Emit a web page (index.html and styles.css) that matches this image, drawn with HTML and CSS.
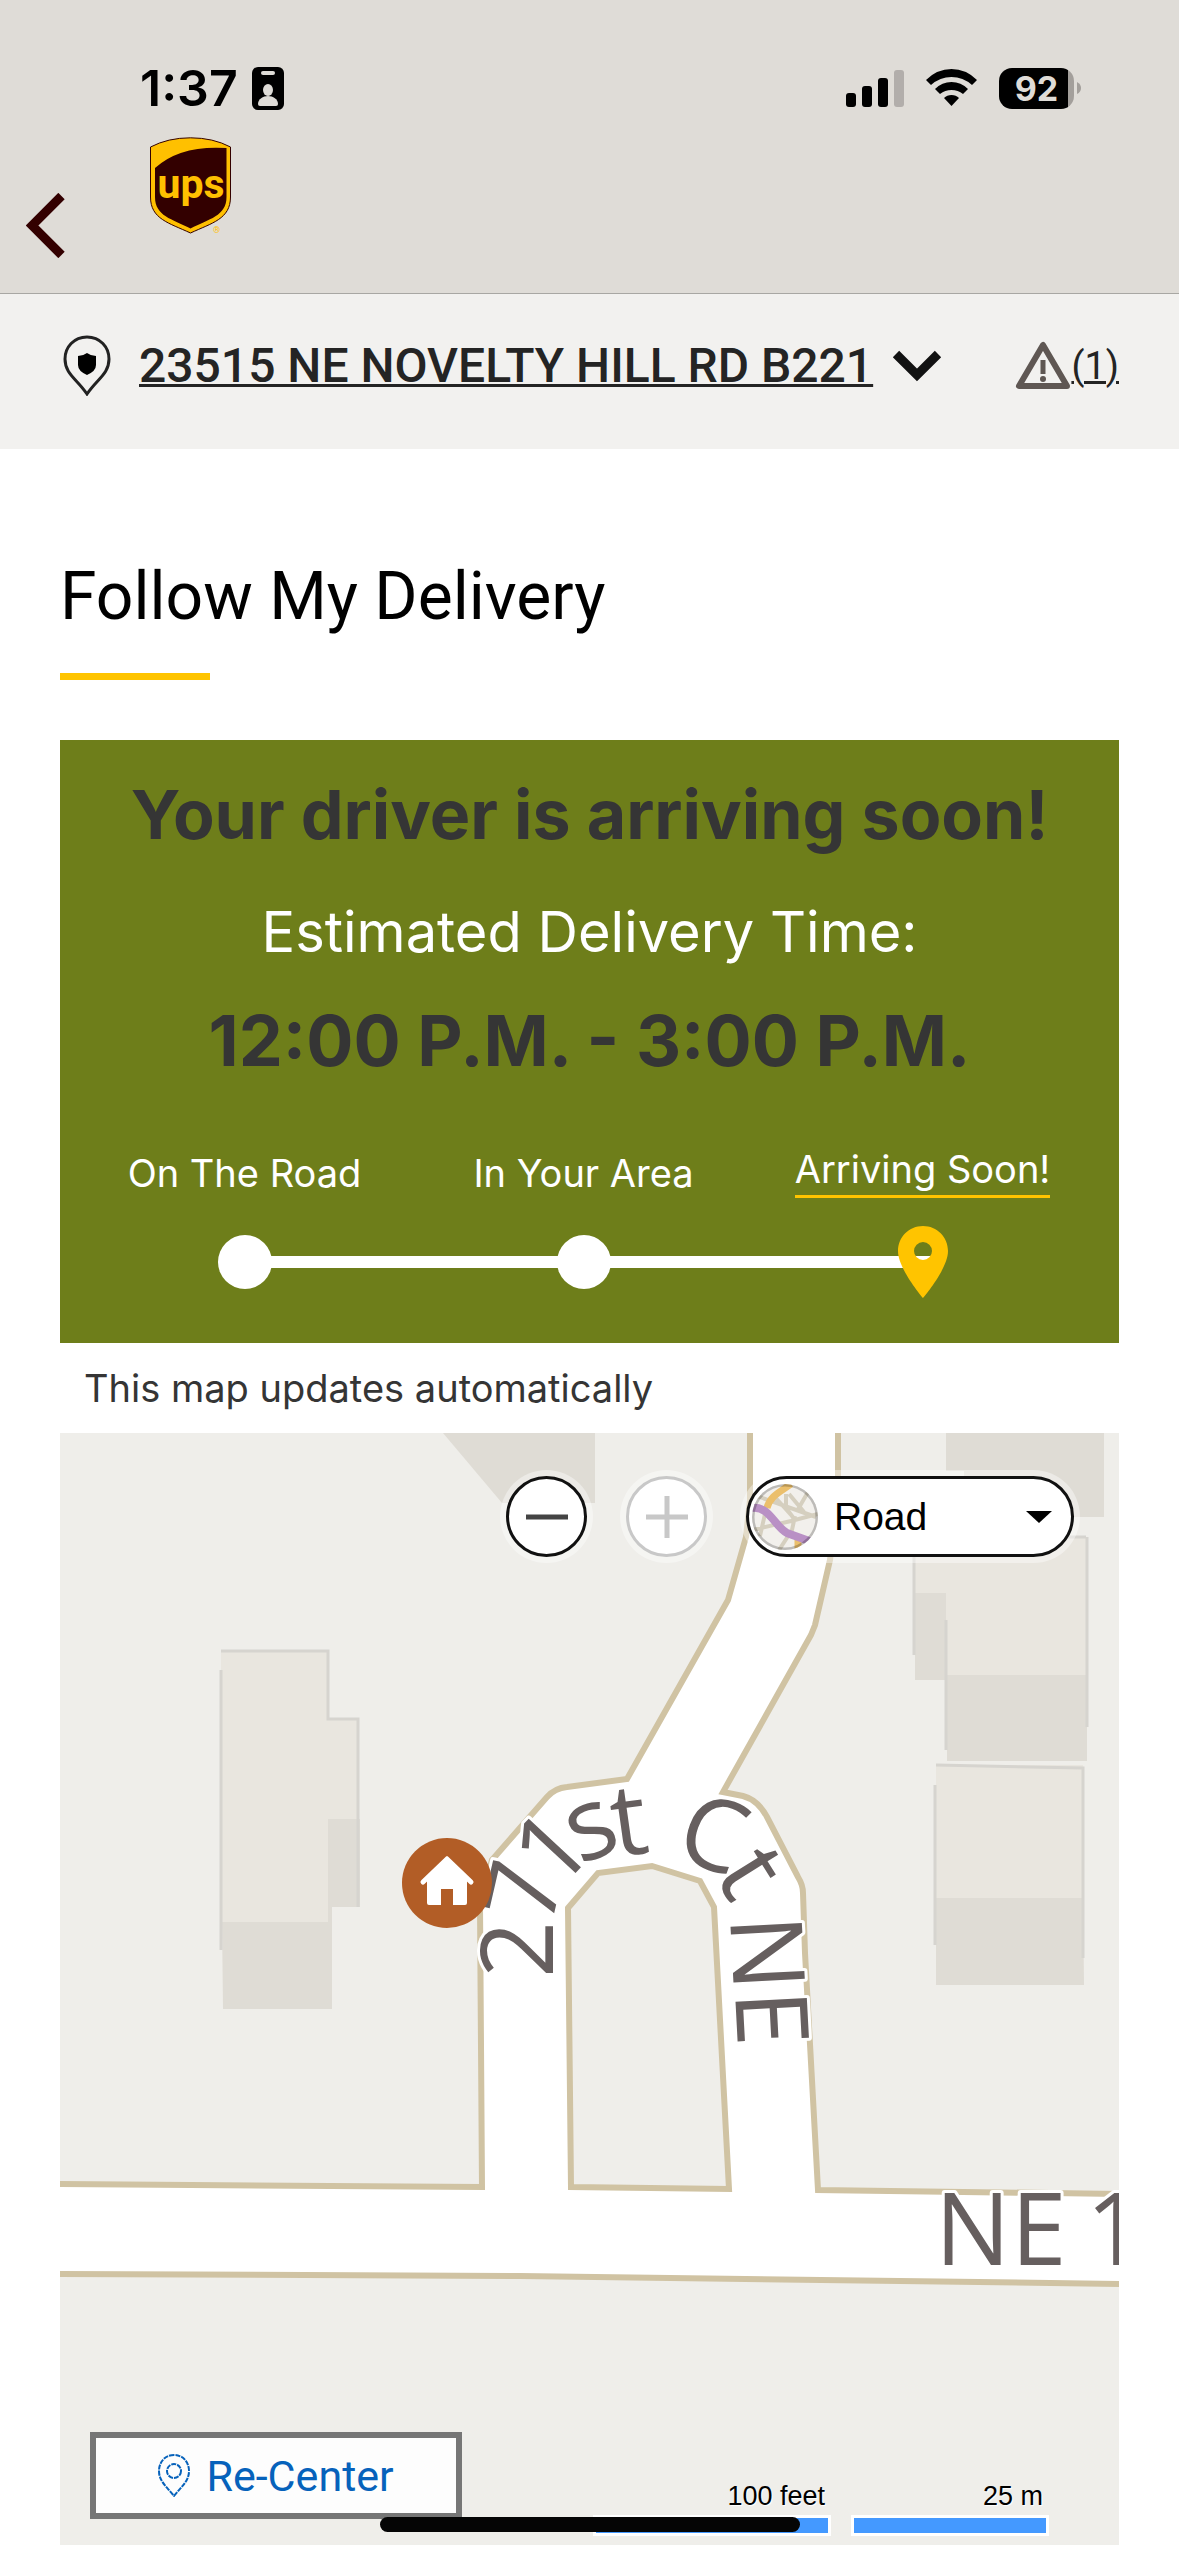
FILE: index.html
```html
<!DOCTYPE html>
<html lang="en">
<head>
<meta charset="utf-8">
<meta name="viewport" content="width=device-width">
<title>Follow My Delivery</title>
<link rel="stylesheet" href="styles.css">
</head>
<body>
<header class="top">
  <div class="status">
    <div class="status-left">
      <span class="clock">1:37</span>
      <svg class="icon" width="32" height="43" viewBox="0 0 32 43" aria-hidden="true">
        <rect width="32" height="43" rx="6"/>
        <g fill="#dfdcd7"><rect x="9" y="4" width="14" height="4" rx="2"/><ellipse cx="16" cy="23" rx="5" ry="6"/><path d="M6 37c0-5 5-8 10-8s10 3 10 8q0 2-2 2H8q-2 0-2-2z"/></g>
      </svg>
    </div>
    <div class="status-right">
      <svg width="58" height="37" viewBox="0 0 58 37" aria-hidden="true">
        <rect y="23" width="10" height="14" rx="3"/><rect x="16" y="16" width="10" height="21" rx="3"/><rect x="32" y="8" width="10" height="29" rx="3"/><rect x="48" width="10" height="37" rx="3" fill="#b2aeab"/>
      </svg>
      <svg width="51" height="38" viewBox="0 0 51 38" aria-hidden="true">
        <path d="M0 11Q11 0 25.500 0T51 11L46 16Q37 8 25.500 8T5 16z"/><path d="M9 20Q16 13 25.500 13T42 20L37 25Q32 21 25.500 21T14 25z"/><path d="M18 29Q21 26 25.500 26T33 29L25.500 37z"/>
      </svg>
      <div class="battery"><span class="battery-level">92</span><svg width="4" height="12" viewBox="0 0 4 12" aria-hidden="true"><path d="M0 0q4 2 4 6t-4 6z" fill="#a39f9b"/></svg></div>
    </div>
  </div>
  <div class="appbar">
    <button class="back" type="button" aria-label="Back">
      <svg width="39" height="65" viewBox="0 0 39 65"><path d="M35.500 3 6 32.500 35.500 62" fill="none" stroke="#330000" stroke-width="9"/></svg>
    </button>
    <a class="logo" href="#" aria-label="UPS home">
      <svg width="81" height="97" viewBox="0 0 81 97">
        <path d="M.5 10Q18 .8 40.500 .8T80.500 10v50C80.500 82 62 86 40.500 96 19 86 .5 82 .5 60z" fill="#ffc000" stroke="#330000"/>
        <path d="M5 31Q30 8 76.500 11V60C76.500 79 59 82 40.500 91.500 22 82 5 79 5 60z" fill="#330000"/>
        <text class="logo-word" x="41" y="61" text-anchor="middle">ups</text>
        <text class="logo-mark" x="63" y="96">®</text>
      </svg>
    </a>
  </div>
</header>

<nav class="address">
  <svg class="address-pin" width="48" height="61" viewBox="0 0 48 61" aria-hidden="true"><path d="M24 2C11 2 2 12 2 24c0 15 12 20 22 35 10-15 22-20 22-35C46 12 37 2 24 2z" fill="none" stroke="#222" stroke-width="3"/><path d="M15 21q5 0 9-3 4 3 9 3v9q0 6-9 10-9-4-9-10z" fill="#000"/></svg>
  <a class="address-link" href="#">23515 NE NOVELTY HILL RD B221</a>
  <svg class="caret" width="50" height="32" viewBox="0 0 50 32" aria-hidden="true"><path d="M4 4 25 25 46 4" fill="none" stroke="#121212" stroke-width="9"/></svg>
  <a class="alerts" href="#" aria-label="1 alert"><svg width="56" height="49" viewBox="0 0 56 49" aria-hidden="true"><path d="M28 4 4 45h48z" fill="none" stroke="#5f5753" stroke-width="6" stroke-linejoin="round"/><path d="M28 19v14" stroke="#5f5753" stroke-width="5"/><circle cx="28" cy="38" r="3" fill="#5f5753"/></svg><span class="alert-count">(1)</span></a>
</nav>

<main class="page">
  <h1 class="title">Follow My Delivery</h1>

  <section class="eta">
    <h2 class="eta-head">Your driver is arriving soon!</h2>
    <p class="eta-label">Estimated Delivery Time:</p>
    <p class="eta-time">12:00 P.M. - 3:00 P.M.</p>
    <ol class="steps">
      <li class="step"><span class="step-label"><span>On The Road</span></span><span class="step-mark"><i class="dot"></i></span></li>
      <li class="step"><span class="step-label"><span>In Your Area</span></span><span class="step-mark"><i class="dot"></i></span></li>
      <li class="step"><span class="step-label"><span class="step-now">Arriving Soon!</span></span><span class="step-mark"><svg class="pin" width="50" height="72" viewBox="0 0 50 72" aria-hidden="true"><path fill-rule="evenodd" fill="#ffc400" d="M25 0C11 0 0 11 0 25c0 18 25 47 25 47s25-29 25-47C50 11 39 0 25 0zm0 16a9 9 0 1 1 0 18 9 9 0 0 1 0-18z"/></svg></span></li>
    </ol>
  </section>

  <p class="note">This map updates automatically</p>

  <section class="map" aria-label="Delivery map">
    <svg class="map-tiles" viewBox="60 1433 1059 1112">
      <rect x="60" y="1433" width="1059" height="1112" fill="#efeeea"/>
      <g fill="#e9e6df">
        <path d="M221 1651h108v68h30v100h-30v103H221z"/>
        <path d="M914 1537h173v138H946v-82h-32z"/>
        <path d="M936 1765h147v133H936z"/>
      </g>
      <g fill="#dfdcd5">
        <path d="M443 1433h152v70h-93z"/>
        <path d="M222 1922h106v-103h32v88h-28v102H223z"/>
        <path d="M946 1433h158v84H964v-46h-18z"/>
        <path d="M915 1593h31v82h141v86H947v-81h-32z"/>
        <path d="M936 1898h147l1 87H936z"/>
      </g>
      <path fill="none" stroke="#d6d4cf" stroke-width="3" d="M221 1651h107v68h30v188M221 1670v280M946 1620v130M1087 1537v190M914 1545v110M936 1765l147 3v190M935 1785v160M1040 1537h46"/>
      <path fill="#fff" d="M60 2184 482 2187 480 1905 492 1860 547 1797Q555 1788 567 1787L627 1779 728 1600 746 1537 750 1500V1433H838V1490L830 1560 815 1625 811 1635 723 1792 743 1796Q758 1800 767 1817L798 1877Q803 1885 803 1893L805 1953 818 2190 1119 2194V2284L520 2276 60 2274z"/>
      <g fill="none" stroke="#d0c3a3" stroke-width="6">
        <path d="M58 2184 482 2187 480 1905 492 1860 547 1797Q555 1788 567 1787L627 1779 728 1600 746 1537 750 1500V1430"/>
        <path d="M838 1430V1490L830 1560 815 1625 811 1635 723 1792 743 1796Q758 1800 767 1817L798 1877Q803 1885 803 1893L805 1953 818 2190 1122 2194"/>
        <path fill="#efeeea" d="M568 1908 598 1873 652 1866 700 1881 714 1907 729 2189 571 2187z"/>
        <path d="M58 2274 520 2276 1122 2284"/>
      </g>
      <g class="street">
        <text x="553 551 557 580 616 650 672 713 730 730 735" y="1978 1927 1893 1865 1857 1850 1856 1875 1900 1917 1992" rotate="-90 -77 -47 -22 -8 0 20 58 80 87 87">271st Ct NE</text>
        <text x="935 1011 1067 1086" y="2265">NE 1</text>
      </g>
      <circle cx="447" cy="1883" r="45" fill="#b25d26"/>
      <path d="M447 1859 423 1882M447 1859 471 1882" stroke="#fff" stroke-width="5" stroke-linecap="round"/>
      <path fill="#fff" d="M447 1858 467 1878V1903q0 2-2 2H453V1889H441V1905H429q-2 0-2-2V1878z"/>
    </svg>

    <div class="controls">
      <button class="round" type="button" aria-label="Zoom out"><svg width="42" height="42" viewBox="0 0 42 42"><path d="M0 21h42" stroke="#444" stroke-width="5"/></svg></button>
      <button class="round" type="button" aria-label="Zoom in" disabled><svg width="42" height="42" viewBox="0 0 42 42"><path d="M0 21h42M21 0v42" stroke="#c8c8c8" stroke-width="5"/></svg></button>
      <div class="style-pick">
        <svg class="style-thumb" width="66" height="66" viewBox="0 0 66 66" aria-hidden="true">
          <clipPath id="thumb"><circle cx="33" cy="33" r="33"/></clipPath>
          <g clip-path="url(#thumb)" fill="none">
            <rect width="66" height="66" fill="#f2f0ec"/>
            <path d="M5 12 64 33M34 10V24L43 36M37 10 52 28M56 8 45 27M15 21 8 52M0 46 39 37 66 30M43 32 40 46 27 66M22 12 40 32" stroke="#d5cfbf" stroke-width="4"/>
            <path d="M15 24C18 12 28 8 39 0M46 50V66" stroke="#ebbf6c" stroke-width="7"/>
            <path d="M0 24C18 22 22 42 35 49L60 58" stroke="#b990c5" stroke-width="8"/>
            <circle cx="33" cy="33" r="32" stroke="#000" stroke-opacity=".22" stroke-width="3"/>
          </g>
        </svg>
        <select class="style-select" aria-label="Map style"><option>Road</option><option>Aerial</option></select>
        <svg class="style-caret" width="26" height="12" viewBox="0 0 26 12" aria-hidden="true"><path d="M0 0h26L13 12z"/></svg>
      </div>
    </div>

    <button class="recenter" type="button">
      <svg width="32" height="43" viewBox="0 0 32 43" aria-hidden="true"><g fill="none" stroke="#0662bb" stroke-width="2"><path stroke-dasharray="5 1" d="M16 1C7 1 1 8 1 17c0 10 7 15 15 25 8-10 15-15 15-25C31 8 25 1 16 1z"/><circle cx="16" cy="17" r="7" stroke-dasharray="5 1"/></g></svg>
      Re-Center
    </button>

    <div class="scale">
      <div class="scale-item scale-feet">100 feet</div>
      <div class="scale-item scale-metres">25 m</div>
    </div>
  </section>
</main>
<div class="home-bar"></div>
</body>
</html>
```
FILE: styles.css
```css
* { box-sizing: border-box; }

body {
  margin: 0;
  background: #fff;
  color: #353535;
  font-family: Inter, "Liberation Sans", sans-serif;
}

svg { display: block; flex: none; }
button { margin: 0; padding: 0; font: inherit; color: inherit; }

/* Status bar and app bar */
.top {
  background: #dfdcd7;
  border-bottom: 1px solid #a8a7a3;
  color: #000;
}
.status {
  display: flex;
  justify-content: space-between;
  padding: 58px 98px 0 140px;
}
.status-left, .status-right { display: flex; align-items: center; height: 60px; }
.status-left { gap: 14px; }
.status-right { gap: 22px; }
.clock { font-size: 50px; line-height: 60px; font-weight: 600; }
.battery { display: flex; align-items: center; gap: 3px; }
.battery-level {
  width: 75px;
  height: 41px;
  border-radius: 13px;
  background: linear-gradient(90deg, #000 69px, #a39f9b 69px);
  color: #dfdcd7;
  font-size: 34px;
  line-height: 41px;
  font-weight: 700;
  text-align: center;
}
.appbar {
  display: flex;
  align-items: flex-start;
  gap: 85px;
  padding: 19px 26px 0;
  height: 175px;
}
.back { margin-top: 56px; border: 0; background: none; }
.logo-word { font: 700 41px Roboto, sans-serif; fill: #ffc000; }
.logo-mark { font: 9px Roboto, sans-serif; fill: #ffc000; }

/* Address strip */
.address {
  display: flex;
  align-items: center;
  height: 155px;
  padding: 0 60px 12px 63px;
  background: #f2f1ef;
  font-family: Roboto, sans-serif;
}
.address a { color: #242424; }
.address-link {
  margin: 0 19px 0 28px;
  font-size: 48px;
  line-height: 56px;
  font-weight: 500;
  text-decoration-thickness: 3px;
  white-space: nowrap;
}
.alerts {
  display: flex;
  align-items: center;
  margin-left: auto;
  font-size: 38px;
  line-height: 48px;
  text-decoration: none;
}
.alert-count { text-decoration: underline 3px; }

/* Page */
.page { padding: 108px 60px 11px; }
.title {
  margin: 0 0 60px;
  color: #000;
  font: 400 66px/80px Roboto, sans-serif;
}
.title::after {
  content: "";
  display: block;
  width: 150px;
  height: 7px;
  margin-top: 36px;
  background: #ffc400;
}

.eta {
  padding: 30px 0 45px;
  background: #6e7e1a;
  color: #fff;
  text-align: center;
}
.eta-head, .eta-label, .eta-time { margin: 0; }
.eta-head, .eta-time { color: #353535; font-weight: 700; }
.eta-head { font-size: 68px; line-height: 88px; }
.eta-label { margin: 38px 0 29px; font-size: 56px; line-height: 72px; }
.eta-time { font-size: 70px; line-height: 88px; }
.steps {
  display: grid;
  grid-template-columns: repeat(3, 1fr);
  margin: 63px 0 0;
  padding: 0 27px 0 15px;
  list-style: none;
  font-size: 38px;
  line-height: 40px;
}
.step { position: relative; }
.step + .step::before {
  content: "";
  position: absolute;
  right: 50%;
  bottom: 30px;
  width: 100%;
  height: 12px;
  background: #fff;
}
.step:last-child::before { margin-right: -10px; }
.step-label { display: flex; align-items: center; justify-content: center; height: 50px; }
.step-now { padding-bottom: 6px; border-bottom: 3px solid #ffc400; }
.step-mark { position: relative; display: flex; align-items: center; justify-content: center; height: 72px; margin-top: 28px; }
.dot { width: 54px; height: 54px; border-radius: 50%; background: #fff; }

.note { margin: 0; padding: 20px 24px; font-size: 38px; line-height: 50px; }

/* Map */
.map { position: relative; }
.map-tiles { width: 100%; height: auto; }
.street {
  font: 500 100px "Open Sans", "Noto Sans", sans-serif;
  fill: #665f5f;
  stroke: #fff;
  stroke-width: 6px;
  stroke-linejoin: round;
  paint-order: stroke;
}
.controls {
  position: absolute;
  top: 43px;
  right: 45px;
  display: flex;
  align-items: center;
  gap: 39px;
}
.round {
  display: grid;
  place-items: center;
  width: 81px;
  height: 81px;
  border: 3px solid #111;
  border-radius: 50%;
  background: #fff;
  box-shadow: 0 0 0 6px rgba(255, 255, 255, .4);
}
.round:disabled { border-color: #c8c8c8; }
.style-pick {
  display: flex;
  align-items: center;
  width: 328px;
  height: 81px;
  padding: 0 19px 0 3px;
  border: 3px solid #111;
  border-radius: 41px;
  background: #fff;
  box-shadow: 0 0 0 6px rgba(255, 255, 255, .4);
}
.style-select {
  appearance: none;
  flex: 1;
  min-width: 0;
  padding: 0 0 0 16px;
  border: 0;
  background: none;
  color: #000;
  font: 39px "Liberation Sans", sans-serif;
}
.recenter {
  position: absolute;
  left: 30px;
  bottom: 26px;
  display: flex;
  align-items: center;
  justify-content: center;
  gap: 16px;
  width: 372px;
  height: 87px;
  border: 6px solid #767676;
  background: #fdfdfd;
  color: #0662bb;
  font: 43px Roboto, sans-serif;
}
.scale {
  position: absolute;
  right: 70px;
  bottom: 9px;
  display: flex;
  gap: 20px;
  color: #000;
  font: 27px/32px "Liberation Sans", sans-serif;
  text-align: right;
  text-shadow: 1px 1px 1px #fff;
}
.scale-item { padding-right: 6px; }
.scale-item::after {
  content: "";
  display: block;
  height: 15px;
  margin-right: -6px;
  margin-top: 3px;
  border: 3px solid #fff;
  background: #4499ff;
}
.scale-feet { width: 238px; }
.scale-metres { width: 198px; }

.home-bar {
  position: fixed;
  left: 50%;
  bottom: 24px;
  width: 420px;
  height: 15px;
  margin-left: -210px;
  border-radius: 8px;
  background: #050505;
}
```
